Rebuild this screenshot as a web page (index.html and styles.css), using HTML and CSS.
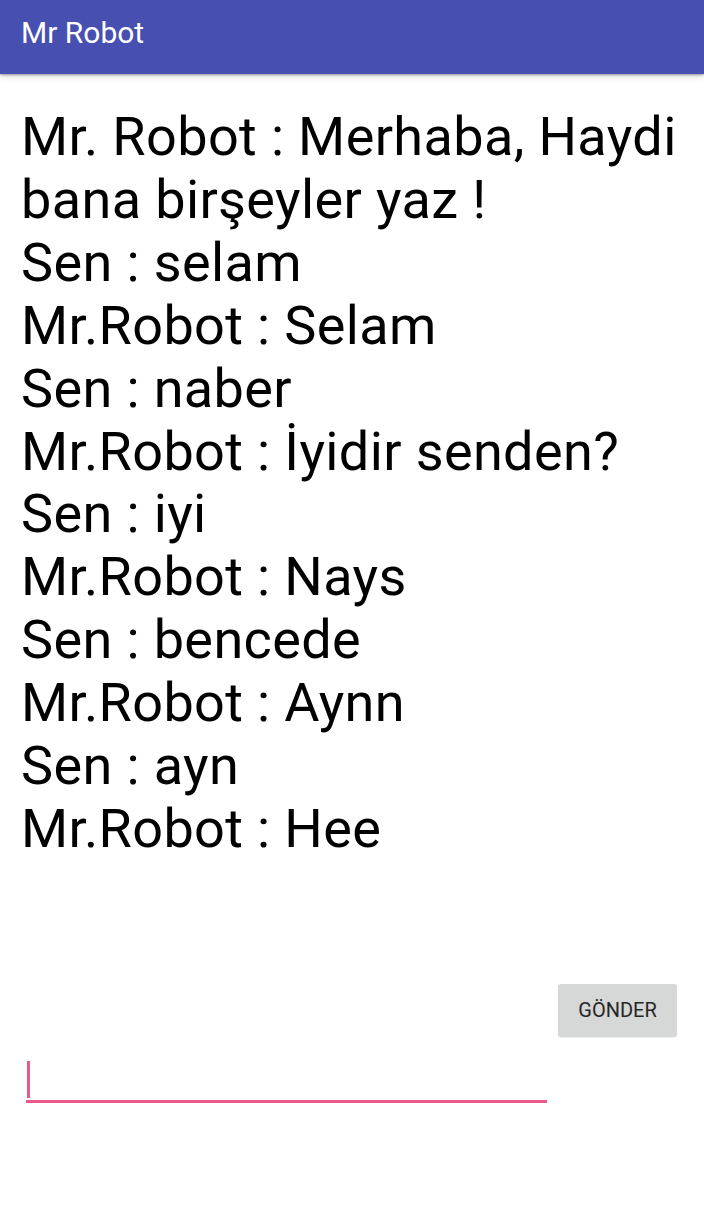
FILE: index.html
```html
<!DOCTYPE html>
<html lang="tr">
<head>
<meta charset="utf-8">
<title>Mr Robot</title>
<link rel="stylesheet" href="styles.css">
</head>
<body>
<header class="appbar">
  <h1 class="appbar-title">Mr Robot</h1>
</header>
<main class="content">
  <div class="chat">
    <p class="line">Mr. Robot : Merhaba, Haydi bana birşeyler yaz !</p>
    <p class="line">Sen : selam</p>
    <p class="line">Mr.Robot : Selam</p>
    <p class="line">Sen : naber</p>
    <p class="line">Mr.Robot : İyidir senden?</p>
    <p class="line">Sen : iyi</p>
    <p class="line">Mr.Robot : Nays</p>
    <p class="line">Sen : bencede</p>
    <p class="line">Mr.Robot : Aynn</p>
    <p class="line">Sen : ayn</p>
    <p class="line">Mr.Robot : Hee</p>
  </div>
  <div class="controls">
    <div class="button-row">
      <button class="send-btn" type="button">GÖNDER</button>
    </div>
    <div class="field">
      <span class="caret"></span>
    </div>
  </div>
</main>
</body>
</html>
```
FILE: styles.css
```css
html, body {
  margin: 0;
  padding: 0;
  background: #ffffff;
}

body {
  font-family: Roboto, "Liberation Sans", sans-serif;
  color: #000;
  width: 704px;
  height: 1212px;
  overflow: hidden;
}

.appbar {
  box-sizing: border-box;
  height: 74px;
  background: #4750b1;
  padding: 15px 21px 0;
  box-shadow: 0 1px 2px rgba(0, 0, 0, 0.35), 0 3px 6px rgba(0, 0, 0, 0.12);
  position: relative;
  z-index: 1;
}

.appbar-title {
  margin: 0;
  font-size: 30px;
  font-weight: 400;
  line-height: normal;
  color: #ffffff;
}

.content {
  padding: 0 21px;
}

.chat {
  margin-top: 32px;
}

.line {
  margin: 0;
  font-size: 54px;
  line-height: 62.9px;
  letter-spacing: 0.38px;
  color: #000;
}

.controls {
  margin-top: 123px;
}

.button-row {
  display: flex;
  justify-content: flex-end;
  padding-right: 6px;
}

.send-btn {
  width: 119px;
  height: 53px;
  border: none;
  border-radius: 3px;
  background: #d6d7d7;
  box-shadow: 0 1px 1px rgba(0, 0, 0, 0.08);
  font-family: Roboto, "Liberation Sans", sans-serif;
  font-size: 20px;
  color: #262626;
  padding: 0;
}

.field {
  margin-left: 5px;
  width: 521px;
  padding-top: 24px;
  border-bottom: 3px solid #ec5a8c;
  display: flex;
}

.caret {
  display: block;
  width: 3px;
  height: 37px;
  margin-left: 1px;
  margin-bottom: 2px;
  background: #ec5a8c;
}
```
